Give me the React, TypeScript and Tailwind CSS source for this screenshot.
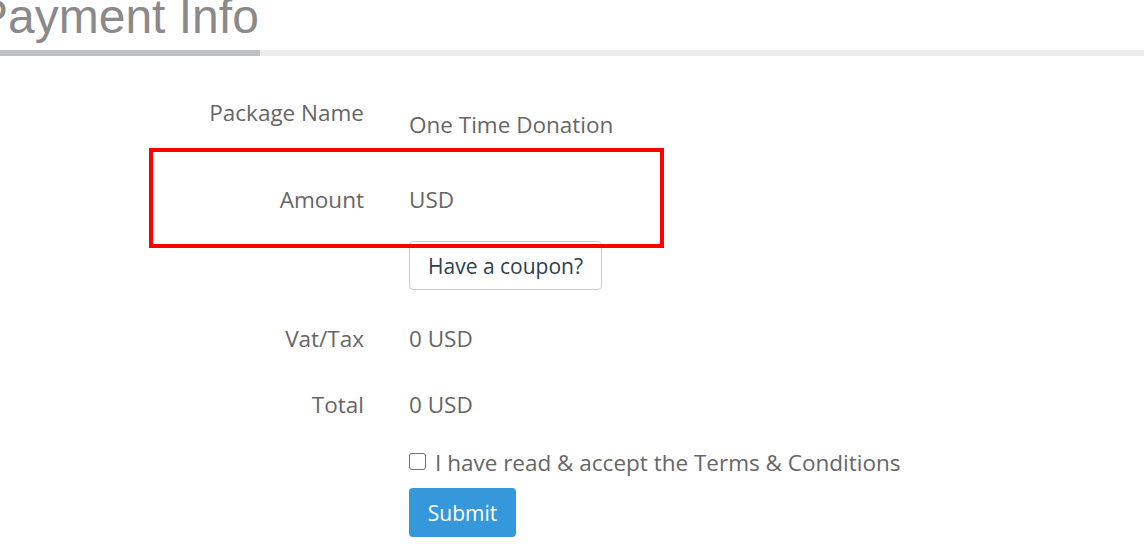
export default function App() {
  const label = "w-[364px] shrink-0 text-right leading-[30px] text-[#666]";
  const value = "ml-[45px] leading-[30px] text-[#666]";
  return (
    <div className="relative w-[1144px] h-[558px] overflow-hidden bg-white" style={{ fontFamily: '"Open Sans", sans-serif' }}>
      <div className="mt-[-10px]">
        <h1
          className="ml-[-24px] text-[48px] leading-[53px] text-[#8a8a8a] whitespace-nowrap"
          style={{ fontFamily: '"Liberation Sans", Arial, sans-serif' }}
        >
          Payment Info
        </h1>
        <div className="mt-[7px] h-[6px] bg-[#ececec]">
          <div className="h-full w-[260px] bg-[#bdc1c4]" />
        </div>
      </div>

      <div className="mt-[42px] text-[22.5px]">
        <div className="flex">
          <div className={label}>Package Name</div>
          <div className={value + " pt-[12px]"}>One Time Donation</div>
        </div>
        <div className="flex mt-[45px]">
          <div className={label}>Amount</div>
          <div className={value}>USD</div>
        </div>
        <div className="flex mt-[26px]">
          <div className="w-[364px] shrink-0" />
          <div className="ml-[45px]">
            <button className="h-[49px] px-[18px] border border-[#ccc] rounded-[4px] bg-white text-[21px] leading-[30px] text-[#2c3e50]">
              Have a coupon?
            </button>
          </div>
        </div>
        <div className="flex mt-[34px]">
          <div className={label}>Vat/Tax</div>
          <div className={value}>0 USD</div>
        </div>
        <div className="flex mt-[36px]">
          <div className={label}>Total</div>
          <div className={value}>0 USD</div>
        </div>
        <div className="flex mt-[28px]">
          <div className="w-[364px] shrink-0" />
          <div className="ml-[45px] flex items-center leading-[30px] text-[#666]">
            <span className="w-[17px] h-[17px] border-[1.5px] border-[#707070] rounded-[3px] bg-white mr-[9px] mt-[-4px]" />
            I have read &amp; accept the Terms &amp; Conditions
          </div>
        </div>
        <div className="flex mt-[10px]">
          <div className="w-[364px] shrink-0" />
          <div className="ml-[45px]">
            <button className="h-[49px] w-[107px] rounded-[4px] bg-[#3498db] text-white text-[21px] leading-[30px]">
              Submit
            </button>
          </div>
        </div>
      </div>

      <div className="absolute left-[149px] top-[148px] w-[515px] h-[100px] border-[4px] border-[#ff0000]" />
    </div>
  );
}
